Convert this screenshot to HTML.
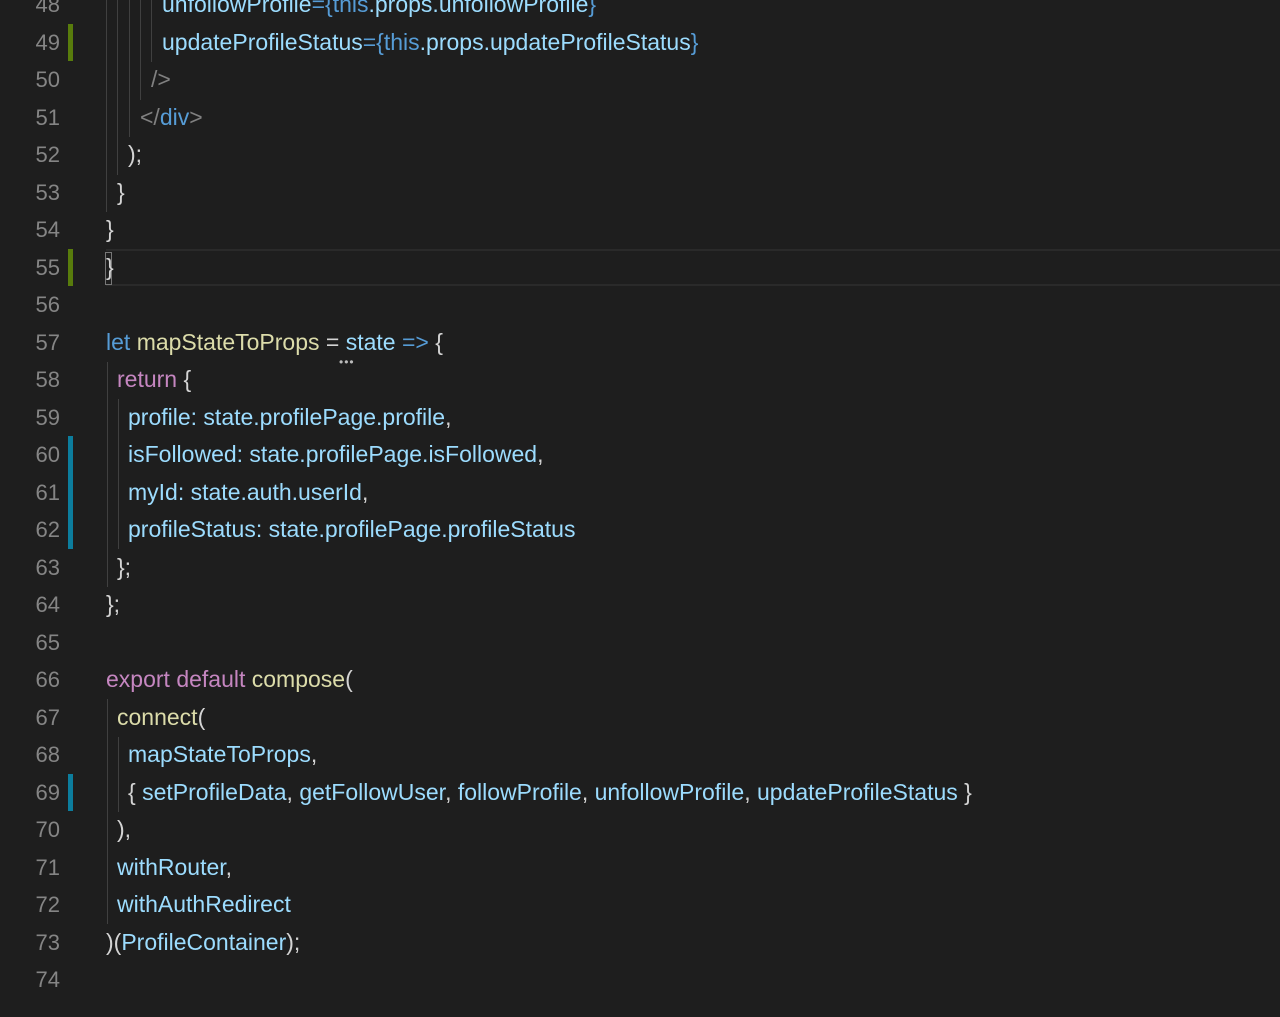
<!DOCTYPE html>
<html><head><meta charset="utf-8"><style>
body{margin:0;background:#1e1e1e;width:1280px;height:1017px;overflow:hidden;position:relative;font-family:"Liberation Sans",sans-serif;font-size:23px}
.l{position:absolute;left:0;height:37.5px;line-height:37.5px;white-space:pre;color:#d4d4d4}
.n{position:absolute;left:0;width:60px;text-align:right;color:#858585;font-size:22px}
.c{position:absolute}
.v{color:#9cdcfe}.k{color:#569cd6}.p{color:#c586c0}.f{color:#dcdcaa}.g{color:#808080}
.m{position:absolute;left:68px;width:5px;height:37px}
.gd{position:absolute;width:1px;background:#404040}
</style></head><body>
<div style="position:absolute;left:106px;right:0;top:249px;height:37px;border-top:2px solid #2a2a2a;border-bottom:2px solid #2a2a2a;box-sizing:border-box"></div>
<div class="m" style="top:24px;background:#587c0c"></div>
<div class="m" style="top:249px;background:#587c0c"></div>
<div class="m" style="top:436px;height:113px;background:#0c7d9d"></div>
<div class="m" style="top:774px;background:#0c7d9d"></div>
<div class="gd" style="left:106px;top:0;height:212px"></div>
<div class="gd" style="left:117px;top:0;height:175px"></div>
<div class="gd" style="left:129px;top:0;height:137px"></div>
<div class="gd" style="left:140px;top:0;height:100px"></div>
<div class="gd" style="left:151px;top:0;height:62px"></div>
<div class="gd" style="left:107px;top:362px;height:225px"></div>
<div class="gd" style="left:118px;top:399px;height:150px"></div>
<div class="gd" style="left:107px;top:699px;height:225px"></div>
<div class="gd" style="left:118px;top:737px;height:75px"></div>
<div style="position:absolute;left:105px;top:252px;width:7px;height:33px;border:1px solid #777;box-sizing:border-box"></div>

<div class="l" style="top:-14px"><span class="n">48</span><span class="c v" style="left:162px">unfollowProfile<span class="k">={this</span>.props.unfollowProfile<span class="k">}</span></span></div>
<div class="l" style="top:23.5px"><span class="n">49</span><span class="c v" style="left:162px">updateProfileStatus<span class="k">={this</span>.props.updateProfileStatus<span class="k">}</span></span></div>
<div class="l" style="top:61px"><span class="n">50</span><span class="c g" style="left:151px">/&gt;</span></div>
<div class="l" style="top:98.5px"><span class="n">51</span><span class="c" style="left:140px"><span class="g">&lt;/</span><span class="k">div</span><span class="g">&gt;</span></span></div>
<div class="l" style="top:136px"><span class="n">52</span><span class="c" style="left:128px">);</span></div>
<div class="l" style="top:173.5px"><span class="n">53</span><span class="c" style="left:117px">}</span></div>
<div class="l" style="top:211px"><span class="n">54</span><span class="c" style="left:106px">}</span></div>
<div class="l" style="top:248.5px"><span class="n">55</span><span class="c" style="left:106px">}</span></div>
<div class="l" style="top:286px"><span class="n">56</span></div>
<div class="l" style="top:323.5px"><span class="n">57</span><span class="c" style="left:106px"><span class="k">let</span> <span class="f">mapStateToProps</span> = <span class="v">state</span> <span class="k">=&gt;</span> {</span></div>
<div style="position:absolute;left:339px;top:355px;color:#bbb;font-size:12px;letter-spacing:1px">•••</div>
<div class="l" style="top:361px"><span class="n">58</span><span class="c" style="left:117px"><span class="p">return</span> {</span></div>
<div class="l" style="top:398.5px"><span class="n">59</span><span class="c v" style="left:128px">profile: state.profilePage.profile<span style="color:#d4d4d4">,</span></span></div>
<div class="l" style="top:436px"><span class="n">60</span><span class="c v" style="left:128px">isFollowed: state.profilePage.isFollowed<span style="color:#d4d4d4">,</span></span></div>
<div class="l" style="top:473.5px"><span class="n">61</span><span class="c v" style="left:128px">myId: state.auth.userId<span style="color:#d4d4d4">,</span></span></div>
<div class="l" style="top:511px"><span class="n">62</span><span class="c v" style="left:128px">profileStatus: state.profilePage.profileStatus</span></div>
<div class="l" style="top:548.5px"><span class="n">63</span><span class="c" style="left:117px">};</span></div>
<div class="l" style="top:586px"><span class="n">64</span><span class="c" style="left:106px">};</span></div>
<div class="l" style="top:623.5px"><span class="n">65</span></div>
<div class="l" style="top:661px"><span class="n">66</span><span class="c" style="left:106px"><span class="p">export default</span> <span class="f">compose</span>(</span></div>
<div class="l" style="top:698.5px"><span class="n">67</span><span class="c" style="left:117px"><span class="f">connect</span>(</span></div>
<div class="l" style="top:736px"><span class="n">68</span><span class="c" style="left:128px"><span class="v">mapStateToProps</span>,</span></div>
<div class="l" style="top:773.5px"><span class="n">69</span><span class="c" style="left:128px">{ <span class="v">setProfileData</span>, <span class="v">getFollowUser</span>, <span class="v">followProfile</span>, <span class="v">unfollowProfile</span>, <span class="v">updateProfileStatus</span> }</span></div>
<div class="l" style="top:811px"><span class="n">70</span><span class="c" style="left:117px">),</span></div>
<div class="l" style="top:848.5px"><span class="n">71</span><span class="c" style="left:117px"><span class="v">withRouter</span>,</span></div>
<div class="l" style="top:886px"><span class="n">72</span><span class="c" style="left:117px"><span class="v">withAuthRedirect</span></span></div>
<div class="l" style="top:923.5px"><span class="n">73</span><span class="c" style="left:106px">)(<span class="v">ProfileContainer</span>);</span></div>
<div class="l" style="top:961px"><span class="n">74</span></div>
</body></html>
